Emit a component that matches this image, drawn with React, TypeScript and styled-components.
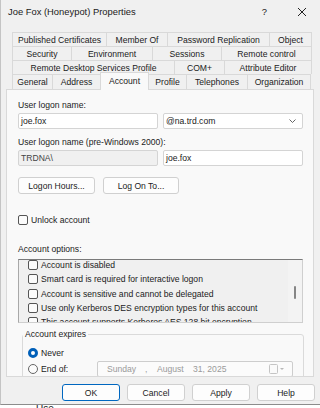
import styled, { createGlobalStyle } from "styled-components";

const GlobalStyle = createGlobalStyle`
  html, body {
    margin: 0;
    padding: 0;
    background: #ffffff;
  }
  body {
    font-family: "Liberation Sans", Arial, sans-serif;
    font-size: 8.6px;
    color: #1b1b1b;
  }
`;

const tabRows: { label: string; w: number; active?: boolean }[][] = [
  [
    { label: "Published Certificates", w: 95 },
    { label: "Member Of", w: 61 },
    { label: "Password Replication", w: 102 },
    { label: "Object", w: 42 },
  ],
  [
    { label: "Security", w: 60 },
    { label: "Environment", w: 81 },
    { label: "Sessions", w: 69 },
    { label: "Remote control", w: 90 },
  ],
  [
    { label: "Remote Desktop Services Profile", w: 163 },
    { label: "COM+", w: 50 },
    { label: "Attribute Editor", w: 87 },
  ],
  [
    { label: "General", w: 41 },
    { label: "Address", w: 48 },
    { label: "Account", w: 49, active: true },
    { label: "Profile", w: 38 },
    { label: "Telephones", w: 61 },
    { label: "Organization", w: 63 },
  ],
];

const options = [
  "Account is disabled",
  "Smart card is required for interactive logon",
  "Account is sensitive and cannot be delegated",
  "Use only Kerberos DES encryption types for this account",
  "This account supports Kerberos AES 128 bit encryption.",
];

function App() {
  return (
    <>
      <GlobalStyle />
      <Window>
        <TitleBar>
          <Title>Joe Fox (Honeypot) Properties</Title>
          <HelpGlyph>?</HelpGlyph>
          <CloseIcon width="10" height="10" viewBox="0 0 10 10">
            <path d="M1 1 L9 9 M9 1 L1 9" stroke="#222" strokeWidth="1" fill="none" />
          </CloseIcon>
        </TitleBar>

        <TabStrip>
          {tabRows.map((row, i) => (
            <TabRow key={i} $last={i === tabRows.length - 1}>
              {row.map((t) => (
                <Tab key={t.label} $w={t.w} $active={t.active}>
                  {t.label}
                </Tab>
              ))}
            </TabRow>
          ))}
        </TabStrip>

        <Panel>
          <Label>User logon name:</Label>
          <FieldRow>
            <TextBox>joe.fox</TextBox>
            <SelectBox>
              @na.trd.com
              <svg width="7" height="4" viewBox="0 0 7 4">
                <polyline points="0.5,0.5 3.5,3.5 6.5,0.5" stroke="#555" strokeWidth="0.9" fill="none" />
              </svg>
            </SelectBox>
          </FieldRow>
          <Label $top={8}>User logon name (pre-Windows 2000):</Label>
          <FieldRow>
            <TextBox $disabled>TRDNA\</TextBox>
            <TextBox>joe.fox</TextBox>
          </FieldRow>
          <ActionRow>
            <PushButton $w={77}>Logon Hours...</PushButton>
            <PushButton $w={76}>Log On To...</PushButton>
          </ActionRow>

          <CheckRow>
            <CheckBox />
            Unlock account
          </CheckRow>

          <Label $top={18}>Account options:</Label>
          <ListBox>
            <ListItems>
              {options.map((o) => (
                <ListItem key={o}>
                  <CheckBox />
                  {o}
                </ListItem>
              ))}
            </ListItems>
            <ScrollTrack>
              <ScrollThumb />
            </ScrollTrack>
          </ListBox>

          <GroupBox>
            <GroupLegend>Account expires</GroupLegend>
            <RadioRow>
              <Radio $on />
              <RadioLabel>Never</RadioLabel>
            </RadioRow>
            <RadioRow>
              <Radio />
              <RadioLabel>End of:</RadioLabel>
              <DatePicker>
                <DatePart $w={38}>Sunday</DatePart>
                <DatePart $w={12}>,</DatePart>
                <DatePart $w={36}>August</DatePart>
                <DatePart $w={40}>31, 2025</DatePart>
                <CalendarIcon width="16" height="10" viewBox="0 0 16 10">
                  <rect x="0.5" y="0.5" width="8" height="9" rx="1" fill="#fafafa" stroke="#c4c4c4" />
                  <polygon points="11,4 15,4 13,6" fill="#b8b8b8" />
                </CalendarIcon>
              </DatePicker>
            </RadioRow>
          </GroupBox>
        </Panel>

        <DialogButtons>
          <PushButton $w={58} $default>OK</PushButton>
          <PushButton $w={58}>Cancel</PushButton>
          <PushButton $w={58}>Apply</PushButton>
          <PushButton $w={58}>Help</PushButton>
        </DialogButtons>
      </Window>
      <BehindStrip>
        <span>Use</span>
      </BehindStrip>
    </>
  );
}

const Window = styled.div`
  width: 320px;
  height: 405px;
  box-sizing: border-box;
  border-left: 1px solid #c4c4c4;
  border-bottom: 1px solid #8c8c8c;
  background: #f0f0f0;
  display: flex;
  flex-direction: column;
  overflow: hidden;
`;

const TitleBar = styled.div`
  height: 32px;
  flex-shrink: 0;
  box-sizing: border-box;
  padding: 6px 0 0 7px;
  display: flex;
  align-items: flex-start;
`;

const Title = styled.div`
  flex: 1;
  font-size: 9.4px;
  line-height: 12px;
  color: #1a1a1a;
`;

const HelpGlyph = styled.div`
  font-size: 9.4px;
  line-height: 12px;
  margin-right: 30px;
`;

const CloseIcon = styled.svg`
  margin: 1px 13px 0 0;
`;

const TabStrip = styled.div`
  padding-left: 11px;
  flex-shrink: 0;
  display: flex;
  flex-direction: column;
`;

const TabRow = styled.div<{ $last?: boolean }>`
  display: flex;
  align-items: flex-start;
  height: ${(p) => (p.$last ? 15 : 14)}px;
`;

const Tab = styled.div<{ $w: number; $active?: boolean }>`
  width: ${(p) => p.$w}px;
  height: ${(p) => (p.$active ? "calc(100% + 3px)" : "100%")};
  margin-top: ${(p) => (p.$active ? -2 : 0)}px;
  box-sizing: border-box;
  border-top: 1px solid #d9d9d9;
  border-right: 1px solid #d9d9d9;
  border-left: ${(p) => (p.$active ? "1px solid #d9d9d9" : "none")};
  margin-left: ${(p) => (p.$active ? -1 : 0)}px;
  background: ${(p) => (p.$active ? "#f9f9f9" : "#f0f0f0")};
  position: ${(p) => (p.$active ? "relative" : "static")};
  z-index: ${(p) => (p.$active ? 1 : "auto")};
  padding-bottom: ${(p) => (p.$active ? 2 : 0)}px;
  display: flex;
  align-items: center;
  justify-content: center;
  white-space: nowrap;
  &:first-child {
    border-left: 1px solid #d9d9d9;
  }
`;

const Panel = styled.div`
  margin-left: 5px;
  width: 308px;
  height: 288px;
  flex-shrink: 0;
  box-sizing: border-box;
  border: 1px solid #d9d9d9;
  background: #f9f9f9;
  padding: 10px 0 0 11px;
  overflow: hidden;
  display: flex;
  flex-direction: column;
  align-items: flex-start;
  & > * {
    flex-shrink: 0;
  }
`;

const Label = styled.div<{ $top?: number }>`
  line-height: 11px;
  margin-top: ${(p) => p.$top ?? 0}px;
`;

const FieldRow = styled.div`
  display: flex;
  gap: 5px;
  margin-top: 2px;
`;

const TextBox = styled.div<{ $disabled?: boolean }>`
  width: 140px;
  height: 16px;
  box-sizing: border-box;
  border: 1px solid #d4d4d4;
  border-radius: 2px;
  background: ${(p) => (p.$disabled ? "#f0f0f0" : "#ffffff")};
  color: ${(p) => (p.$disabled ? "#444" : "#1b1b1b")};
  padding-left: 2px;
  display: flex;
  align-items: center;
`;

const SelectBox = styled(TextBox)`
  justify-content: space-between;
  padding-right: 6px;
`;

const ActionRow = styled.div`
  display: flex;
  gap: 8px;
  margin-top: 11px;
`;

const PushButton = styled.div<{ $w: number; $default?: boolean }>`
  width: ${(p) => p.$w}px;
  height: 17px;
  box-sizing: border-box;
  border: 1px solid ${(p) => (p.$default ? "#0067c0" : "#d0d0d0")};
  border-radius: 3px;
  background: #fdfdfd;
  display: flex;
  align-items: center;
  justify-content: center;
`;

const CheckRow = styled.div`
  display: flex;
  align-items: center;
  gap: 3px;
  height: 12px;
  margin-top: 20px;
`;

const CheckBox = styled.span`
  width: 10px;
  height: 10px;
  box-sizing: border-box;
  border: 1px solid #555;
  border-radius: 2px;
  background: #fbfbfb;
  flex-shrink: 0;
`;

const ListBox = styled.div`
  margin-top: 4px;
  width: 285px;
  height: 64px;
  box-sizing: border-box;
  border: 1px solid #cfcfcf;
  border-top-color: #7a7a7a;
  border-left-color: #a8a8a8;
  background: #f0f0f0;
  display: flex;
  overflow: hidden;
`;

const ListItems = styled.div`
  flex: 1;
  margin-top: -2px;
  padding-left: 9px;
  display: flex;
  flex-direction: column;
`;

const ListItem = styled.div`
  height: 14.3px;
  flex-shrink: 0;
  display: flex;
  align-items: center;
  gap: 3px;
  white-space: nowrap;
`;

const ScrollTrack = styled.div`
  width: 14px;
  background: #f3f3f3;
  padding: 26px 0 0 6px;
  box-sizing: border-box;
`;

const ScrollThumb = styled.div`
  width: 2px;
  height: 13px;
  border-radius: 1px;
  background: #858585;
`;

const GroupBox = styled.fieldset`
  margin: 6px 0 0 4px;
  width: 282px;
  box-sizing: border-box;
  border: 1px solid #dadada;
  border-radius: 3px;
  padding: 5px 0 10px 5px;
  min-width: 0;
`;

const GroupLegend = styled.legend`
  line-height: 11px;
  padding: 0 2px;
  margin-left: -5px;
`;

const RadioRow = styled.div`
  display: flex;
  align-items: center;
  height: 16px;
`;

const Radio = styled.span<{ $on?: boolean }>`
  width: 10px;
  height: 10px;
  box-sizing: border-box;
  border-radius: 50%;
  flex-shrink: 0;
  background: ${(p) => (p.$on ? "#ffffff" : "#fbfbfb")};
  border: ${(p) => (p.$on ? "3px solid #005fb8" : "1px solid #666")};
`;

const RadioLabel = styled.span`
  margin-left: 3px;
  width: 56px;
`;

const DatePicker = styled.div`
  width: 196px;
  height: 16px;
  box-sizing: border-box;
  border: 1px solid #cdcdcd;
  border-radius: 2px;
  background: #fbfbfb;
  display: flex;
  align-items: center;
  padding-left: 9px;
  color: #9a9a9a;
`;

const DatePart = styled.span<{ $w: number }>`
  width: ${(p) => p.$w}px;
  white-space: nowrap;
`;

const CalendarIcon = styled.svg`
  margin-left: auto;
  margin-right: 7px;
`;

const DialogButtons = styled.div`
  display: flex;
  justify-content: flex-end;
  gap: 7px;
  padding-right: 5px;
  margin-top: 7px;
`;

const BehindStrip = styled.div`
  height: 3px;
  overflow: hidden;
  padding-left: 36px;
  background: #ffffff;
  font-size: 10px;
  line-height: 8px;
  color: #222;
`;

export default App;
